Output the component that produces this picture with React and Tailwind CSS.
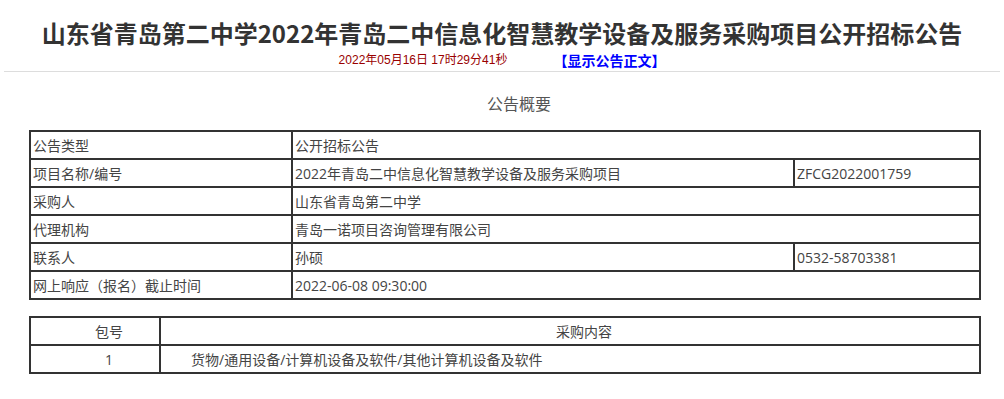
import React from "react";

const font = { fontFamily: '"Noto Sans CJK SC", "Liberation Sans", sans-serif' };
const tableFont = { fontFamily: '"Open Sans", "Noto Sans CJK SC", sans-serif' };
const dateFont = { fontFamily: '"Liberation Sans", "Noto Sans CJK SC", sans-serif' };

const rows = [
  ["公告类型", "公开招标公告"],
  ["项目名称/编号", "2022年青岛二中信息化智慧教学设备及服务采购项目", "ZFCG2022001759"],
  ["采购人", "山东省青岛第二中学"],
  ["代理机构", "青岛一诺项目咨询管理有限公司"],
  ["联系人", "孙硕", "0532-58703381"],
  ["网上响应（报名）截止时间", "2022-06-08 09:30:00"],
];

const cell = "border-2 border-[#333] px-[2px] h-[28px] align-middle";

export default function App() {
  return (
    <div className="w-[1004px] h-[399px] bg-white overflow-hidden" style={font}>
      {/* title */}
      <h1 className="pt-[17px] h-[49px] text-center text-[24px] leading-8 font-bold text-[#333]">
        山东省青岛第二中学2022年青岛二中信息化智慧教学设备及服务采购项目公开招标公告
      </h1>
      <div className="mx-1 h-[23px] border-b border-[#ddd] flex items-center justify-center">
        <span className="text-[12px] text-[#990000]" style={dateFont}>2022年05月16日 17时29分41秒</span>
        <span className="ml-[46px] text-[14px] font-bold text-[#0000ff]">【显示公告正文】</span>
      </div>

      <div className="mt-[19px] pl-[34px] text-center text-[16px] leading-6 text-[#555]">公告概要</div>

      <table className="mt-[15px] ml-[29px] w-[952px] table-fixed border-collapse text-[14px] text-[#444]" style={tableFont}>
        <colgroup>
          <col className="w-[262px]" />
          <col className="w-[502px]" />
          <col />
        </colgroup>
        <tbody>
          {rows.map((r, i) => (
            <tr key={i}>
              <td className={cell}>{r[0]}</td>
              {r.length === 3 ? (
                <>
                  <td className={cell}>{r[1]}</td>
                  <td className={cell}>{r[2]}</td>
                </>
              ) : (
                <td className={cell} colSpan={2}>{r[1]}</td>
              )}
            </tr>
          ))}
        </tbody>
      </table>

      <table className="mt-[16px] ml-[29px] w-[952px] table-fixed border-collapse text-[14px] text-[#444]" style={tableFont}>
        <colgroup>
          <col className="w-[130px]" />
          <col />
        </colgroup>
        <tbody>
          <tr>
            <td className={cell + " pl-[30px] text-center"}>包号</td>
            <td className={cell + " pl-[30px] text-center"}>采购内容</td>
          </tr>
          <tr>
            <td className={cell + " pl-[30px] text-center"}>1</td>
            <td className={cell + " pl-[30px]"}>货物/通用设备/计算机设备及软件/其他计算机设备及软件</td>
          </tr>
        </tbody>
      </table>
    </div>
  );
}
